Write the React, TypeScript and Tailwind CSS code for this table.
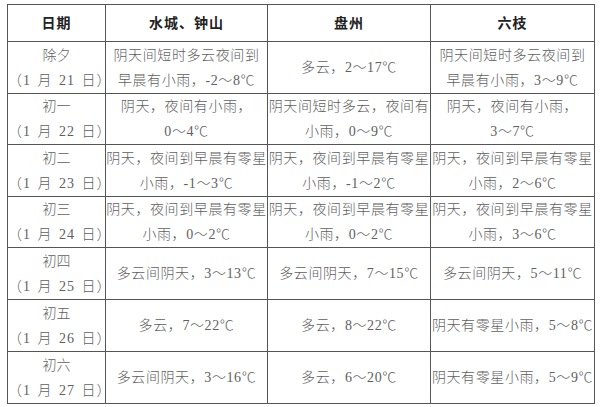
import React from "react";

type Row = {
  day: string;
  date: string;
  cells: string[][];
};

const rows: Row[] = [
  {
    day: "除夕",
    date: "（1 月 21 日）",
    cells: [
      ["阴天间短时多云夜间到", "早晨有小雨，-2～8℃"],
      ["多云，2～17℃"],
      ["阴天间短时多云夜间到", "早晨有小雨，3～9℃"],
    ],
  },
  {
    day: "初一",
    date: "（1 月 22 日）",
    cells: [
      ["阴天，夜间有小雨，", "0～4℃"],
      ["阴天间短时多云，夜间有", "小雨，0～9℃"],
      ["阴天，夜间有小雨，", "3～7℃"],
    ],
  },
  {
    day: "初二",
    date: "（1 月 23 日）",
    cells: [
      ["阴天，夜间到早晨有零星", "小雨，-1～3℃"],
      ["阴天，夜间到早晨有零星", "小雨，-1～2℃"],
      ["阴天，夜间到早晨有零星", "小雨，2～6℃"],
    ],
  },
  {
    day: "初三",
    date: "（1 月 24 日）",
    cells: [
      ["阴天，夜间到早晨有零星", "小雨，0～2℃"],
      ["阴天，夜间到早晨有零星", "小雨，0～2℃"],
      ["阴天，夜间到早晨有零星", "小雨，3～6℃"],
    ],
  },
  {
    day: "初四",
    date: "（1 月 25 日）",
    cells: [["多云间阴天，3～13℃"], ["多云间阴天，7～15℃"], ["多云间阴天，5～11℃"]],
  },
  {
    day: "初五",
    date: "（1 月 26 日）",
    cells: [["多云，7～22℃"], ["多云，8～22℃"], ["阴天有零星小雨，5～8℃"]],
  },
  {
    day: "初六",
    date: "（1 月 27 日）",
    cells: [["多云间阴天，3～16℃"], ["多云，6～20℃"], ["阴天有零星小雨，5～9℃"]],
  },
];

const heights = ["h-[52px]", "h-[50px]", "h-[52px]", "h-[51px]", "h-[52px]", "h-[52px]", "h-[52px]"];

const cellCls = "border border-[#555] text-center align-middle px-0 leading-[25px] whitespace-nowrap";

export default function App() {
  return (
    <div
      className="w-[600px] h-[407px] bg-white pl-[7px] pt-[4px] text-[14px] text-[#606060] font-light"
      style={{ fontFamily: '"Liberation Serif", "Noto Sans CJK SC", serif' }}
    >
      <table className="border-collapse table-fixed w-[587px]">
        <colgroup>
          <col className="w-[98px]" />
          <col className="w-[162px]" />
          <col className="w-[163px]" />
          <col className="w-[164px]" />
        </colgroup>
        <thead>
          <tr className="h-[37px]">
            {["日期", "水城、钟山", "盘州", "六枝"].map((h) => (
              <th key={h} className={`${cellCls} font-bold text-[#222] tracking-[1px]`}>
                {h}
              </th>
            ))}
          </tr>
        </thead>
        <tbody>
          {rows.map((r, i) => (
            <tr key={r.day} className={heights[i]}>
              <td className={cellCls}>
                <div>{r.day}</div>
                <div className="tracking-[1px] [word-spacing:2px]">{r.date}</div>
              </td>
              {r.cells.map((lines, j) => (
                <td key={j} className={`${cellCls} tracking-[0.6px]`}>
                  {lines.map((l, k) => (
                    <div key={k}>{l}</div>
                  ))}
                </td>
              ))}
            </tr>
          ))}
        </tbody>
      </table>
    </div>
  );
}
